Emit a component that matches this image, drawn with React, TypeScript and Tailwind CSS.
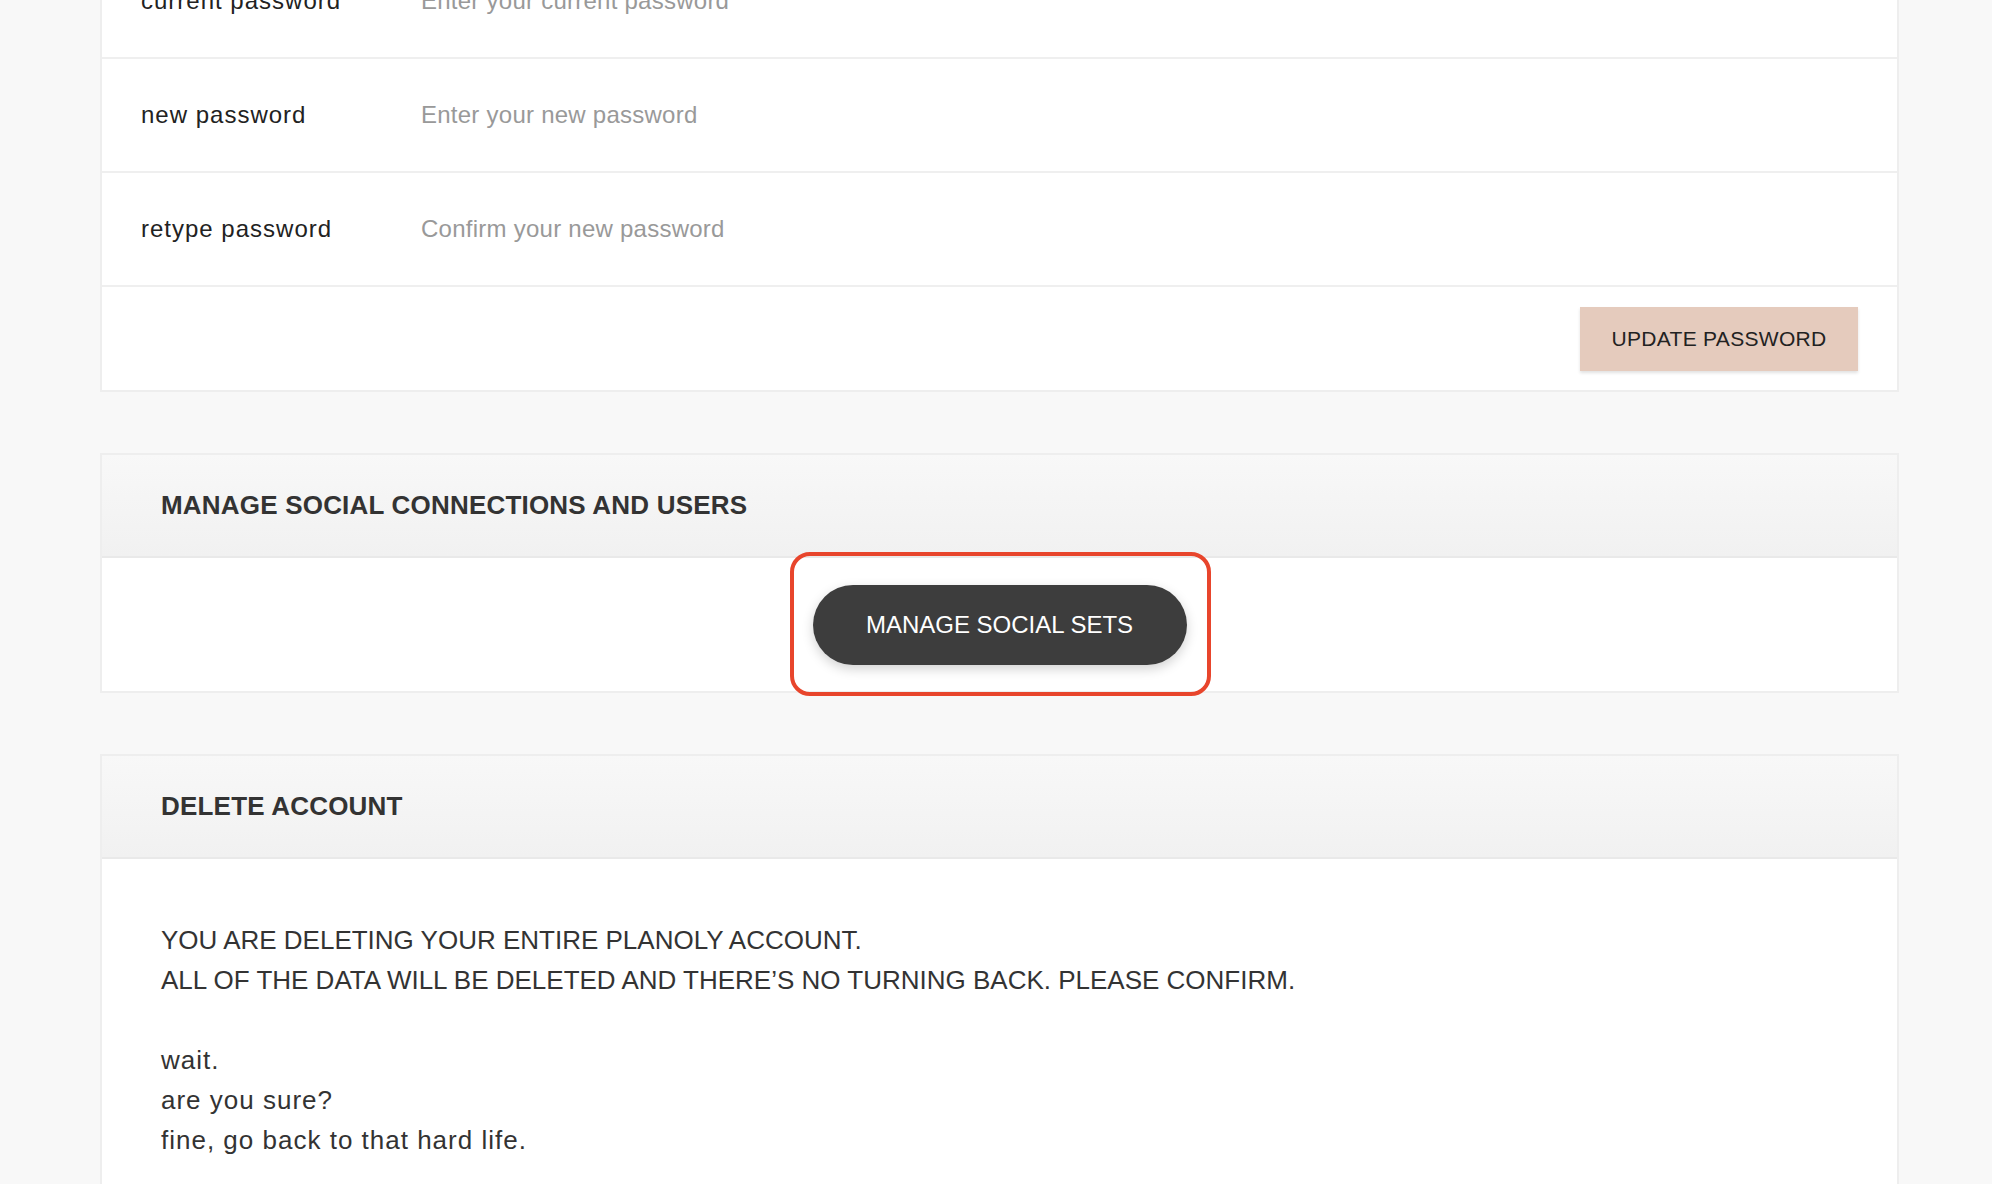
import React from "react";

const FONT = "font-['Liberation_Sans',Arial,sans-serif]";

function PasswordRow({ label, placeholder }: { label: string; placeholder: string }) {
  return (
    <div className="flex h-[114px] items-center border-b-2 border-[#efefef] pl-[39px]">
      <label className="w-[280px] shrink-0 text-[24px] tracking-[1px] text-[#222]">{label}</label>
      <input
        type="password"
        placeholder={placeholder}
        className="flex-1 bg-transparent text-[24px] tracking-[0.25px] text-[#222] outline-none placeholder:text-[#999]"
      />
    </div>
  );
}

function SectionHeader({ title }: { title: string }) {
  return (
    <div className="flex h-[103px] items-center border-b-2 border-[#e9e9e9] bg-gradient-to-b from-[#f8f8f8] to-[#f1f1f1] pl-[59px]">
      <h2 className="text-[26px] font-bold tracking-[0.2px] text-[#333]">{title}</h2>
    </div>
  );
}

export default function App() {
  return (
    <div className={`h-[1184px] overflow-hidden bg-[#f8f8f8] ${FONT}`}>
      <div className="ml-[100px] mt-[-57px] flex w-[1799px] flex-col gap-[61px]">
        <div className="border-2 border-[#eeeeee] bg-white">
          <PasswordRow label="current password" placeholder="Enter your current password" />
          <PasswordRow label="new password" placeholder="Enter your new password" />
          <PasswordRow label="retype password" placeholder="Confirm your new password" />
          <div className="flex h-[103px] items-center justify-end pr-[39px]">
            <button className="h-[64px] w-[278px] bg-[#e5cbbd] text-[21px] tracking-[0.3px] text-[#222] shadow-[0_2px_3px_rgba(0,0,0,0.12)]">
              UPDATE PASSWORD
            </button>
          </div>
        </div>

        <div className="border-2 border-[#eeeeee] bg-white">
          <SectionHeader title="MANAGE SOCIAL CONNECTIONS AND USERS" />
          <div className="flex h-[133px] items-center justify-center">
            <div className="relative">
              <button className="h-[80px] w-[374px] rounded-full bg-[#3d3d3d] text-[24px] text-white shadow-[0_4px_12px_rgba(0,0,0,0.18)]">
                MANAGE SOCIAL SETS
              </button>
              <span className="pointer-events-none absolute bottom-[-31px] left-[-23px] right-[-24px] top-[-33px] rounded-[20px] border-4 border-[#e8452c]" />
            </div>
          </div>
        </div>

        <div className="border-2 border-[#eeeeee] bg-white">
          <SectionHeader title="DELETE ACCOUNT" />
          <div className="pb-[60px] pl-[59px] pt-[61px] text-[26px] leading-[40px] text-[#333]">
            <p>YOU ARE DELETING YOUR ENTIRE PLANOLY ACCOUNT.</p>
            <p>ALL OF THE DATA WILL BE DELETED AND THERE’S NO TURNING BACK. PLEASE CONFIRM.</p>
            <p>&nbsp;</p>
            <p className="tracking-[1px]">wait.</p>
            <p className="tracking-[1px]">are you sure?</p>
            <p className="tracking-[1px]">fine, go back to that hard life.</p>
          </div>
        </div>
      </div>
    </div>
  );
}
